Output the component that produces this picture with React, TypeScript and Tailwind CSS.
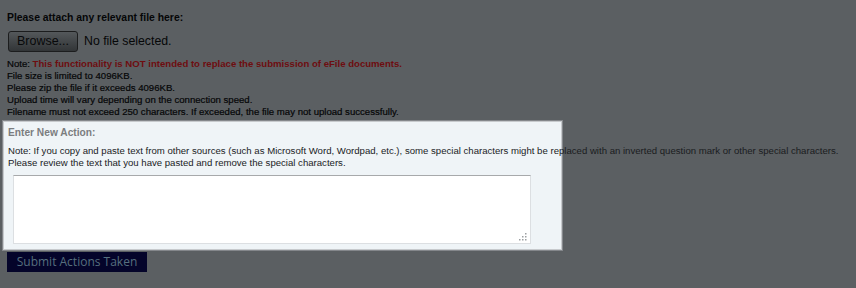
import React from "react";

function Grip() {
  const dots: [number, number][] = [
    [6, 0],
    [3, 3],
    [6, 3],
    [0, 6],
    [3, 6],
    [6, 6],
  ];
  return (
    <svg width="8" height="8" viewBox="0 0 8 8" className="absolute right-[3px] bottom-[2px]">
      {dots.map(([x, y], i) => (
        <rect key={i} x={x} y={y} width="1.5" height="1.5" fill="#9c9fa2" />
      ))}
    </svg>
  );
}

export default function App() {
  return (
    <div className="w-[856px] min-h-[288px] bg-[#5b5f62] font-['Liberation_Sans',Arial,sans-serif] text-[#050607]">
      <div className="pl-[7px] pt-[12px]">
        <div className="text-[10.4px] font-bold leading-[12px]">Please attach any relevant file here:</div>
        <div className="mt-[7px] ml-px flex items-center">
          <div className="flex h-[21px] w-[70px] items-center justify-center rounded-[3px] border border-[#1c1d1e] bg-gradient-to-b from-[#54585b] to-[#323537] text-[12.5px] text-[#08090a]">
            Browse...
          </div>
          <span className="ml-[6px] text-[12.3px] text-[#060708]">No file selected.</span>
        </div>
        <div className="mt-[6px] text-[9.6px] leading-[12px] whitespace-nowrap [-webkit-text-stroke:0.2px_#050607]">
          <div>
            Note: <span className="font-bold text-[#6e0d10] [-webkit-text-stroke:0]">This functionality is NOT intended to replace the submission of eFile documents.</span>
          </div>
          <div>File size is limited to 4096KB.</div>
          <div>Please zip the file if it exceeds 4096KB.</div>
          <div>Upload time will vary depending on the connection speed.</div>
          <div>Filename must not exceed 250 characters. If exceeded, the file may not upload successfully.</div>
        </div>
      </div>
      <div className="ml-[3px] mt-[3px] h-[129px] w-[559px] border border-[#c7cacd] bg-[#eff4f7] pl-[4px] pt-[5px] shadow-[0_0_0_1px_rgba(150,153,156,0.7)]">
        <div className="text-[10.2px] font-bold leading-[12px] text-[#7b7d7f]">Enter New Action:</div>
        <div className="mt-[6px] text-[9.6px] leading-[12px] whitespace-nowrap text-[#1a1c1e]">
          <div>
            Note: If you copy and paste text from other sources (such as Microsoft Word, Wordpad, etc.), some special characters might be replaced with an inverted question mark or other special characters.
          </div>
          <div>Please review the text that you have pasted and remove the special characters.</div>
        </div>
        <div className="relative ml-[5px] mt-[6px] h-[69px] w-[518px] border border-[#dcdfe2] border-t-[#a7a9ab] bg-white">
          <Grip />
        </div>
      </div>
      <div className="ml-[7px] mt-[2px] flex h-[20px] w-[140px] items-center justify-center bg-[#04042a] font-['Open_Sans',sans-serif] text-[12px] text-[#566f7e]">
        Submit Actions Taken
      </div>
    </div>
  );
}
